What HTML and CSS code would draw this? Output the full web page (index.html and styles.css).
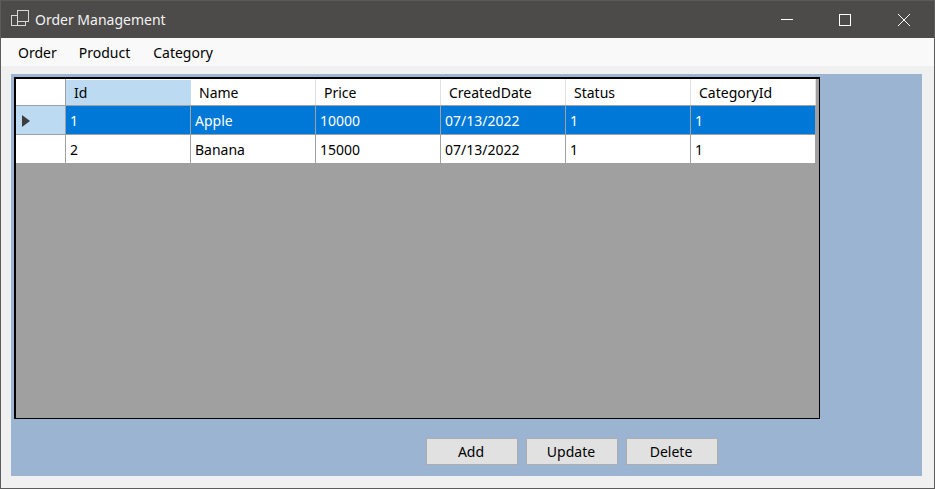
FILE: index.html
```html
<!DOCTYPE html>
<html lang="en">
<head>
<meta charset="utf-8">
<title>Order Management</title>
<link rel="stylesheet" href="styles.css">
</head>
<body>
<div class="window">
  <header class="titlebar">
    <svg class="app-icon" width="18" height="19" viewBox="0 0 18 19" fill="none" stroke="#d8d8d8" stroke-width="1">
      <rect x="6.5" y=".5" width="11" height="11"/>
      <rect x=".5" y="5.5" width="6" height="10"/>
      <rect x="6.5" y="11.5" width="8" height="4"/>
    </svg>
    <span class="title">Order Management</span>
    <div class="controls">
      <div class="control"><svg width="12" height="12" viewBox="0 0 12 12" stroke="#fff" fill="none"><path d="M0 5.5H12"/></svg></div>
      <div class="control"><svg width="12" height="12" viewBox="0 0 12 12" stroke="#fff" fill="none"><rect x=".5" y=".5" width="11" height="11"/></svg></div>
      <div class="control"><svg width="12" height="12" viewBox="0 0 12 12" stroke="#fff" fill="none"><path d="M0 0L12 12M12 0L0 12"/></svg></div>
    </div>
  </header>
  <nav class="menu"><span>Order</span><span class="menu-mid">Product</span><span>Category</span></nav>
  <main class="client">
    <section class="panel">
      <div class="grid">
        <div class="row head">
          <div class="rowhead"></div>
          <div class="cell sel">Id</div><div class="cell">Name</div><div class="cell">Price</div><div class="cell">CreatedDate</div><div class="cell">Status</div><div class="cell">CategoryId</div>
        </div>
        <div class="row data current">
          <div class="rowhead"><svg class="arrow" width="8" height="12" viewBox="0 0 8 12"><path d="M0 0L8 6L0 12Z" fill="#3c3c3c"/></svg></div>
          <div class="cell">1</div><div class="cell">Apple</div><div class="cell">10000</div><div class="cell">07/13/2022</div><div class="cell">1</div><div class="cell">1</div>
        </div>
        <div class="row data">
          <div class="rowhead"></div>
          <div class="cell">2</div><div class="cell">Banana</div><div class="cell">15000</div><div class="cell">07/13/2022</div><div class="cell">1</div><div class="cell">1</div>
        </div>
      </div>
      <div class="actions"><button>Add</button><button>Update</button><button>Delete</button></div>
    </section>
  </main>
</div>
</body>
</html>
```
FILE: styles.css
```css
* { box-sizing: border-box; }
html, body { margin: 0; height: 100%; overflow: hidden; }
body { font-family: "Noto Sans", "Open Sans", sans-serif; font-size: 14px; color: #000; }
.window { width: 935px; height: 489px; display: flex; flex-direction: column; background: #f0f0f0; border: 1px solid #5c5c5c; border-top-color: #5a5a58; }
.titlebar { height: 37px; flex: none; background: #4c4b49; color: #f2f2f2; display: flex; align-items: center; padding-left: 10px; }
.app-icon { flex: none; margin-right: 6px; }
.title { font-size: 14px; }
.controls { margin-left: auto; display: flex; }
.control { width: 58px; height: 37px; display: flex; align-items: center; justify-content: center; }
.control:last-child { width: 60px; }
.menu { height: 28px; flex: none; background: #f9f9f9; display: flex; align-items: center; gap: 22px; padding-left: 17px; }
.menu-mid { margin-right: 1px; }
.client { flex: 1; padding: 8px 12px 12px 10px; }
.panel { height: 100%; background: #9ab4d2; padding: 3px 0 0 3px; display: flex; flex-direction: column; }
.grid { width: 806px; height: 342px; background: #a0a0a0; border: 1px solid #000; border-width: 2px 1px 1px 2px; }
.row { display: flex; width: 800px; }
.head { height: 26px; background: #fff; }
.data { height: 29px; background: #fff; border-top: 1px solid #a0a0a0; }
.rowhead { width: 50px; flex: none; background: #fff; display: flex; align-items: center; padding-left: 6px; border-right: 1px solid #a0a0a0; }
.arrow { margin-top: 2px; }
.cell { width: 125px; flex: none; padding: 1px 0 0 4px; line-height: 28px; white-space: nowrap; border-right: 1px solid #a0a0a0; }
.head .cell { padding: 0 0 0 8px; line-height: 27px; border-right-color: #e0e0e0; }
.head .sel { background: #bcdbf3; border-right-color: #bcdbf3; margin-top: 1px; line-height: 25px; }
.current .cell { background: #0078d7; color: #fff; }
.current .rowhead { background: #bcdbf3; }
.actions { display: flex; gap: 8px; padding: 19px 0 0 412px; }
button { width: 92px; height: 27px; background: #e1e1e1; border: 1px solid #adadad; border-radius: 0; font: inherit; color: #000; padding: 0 2px 0 0; }
```
